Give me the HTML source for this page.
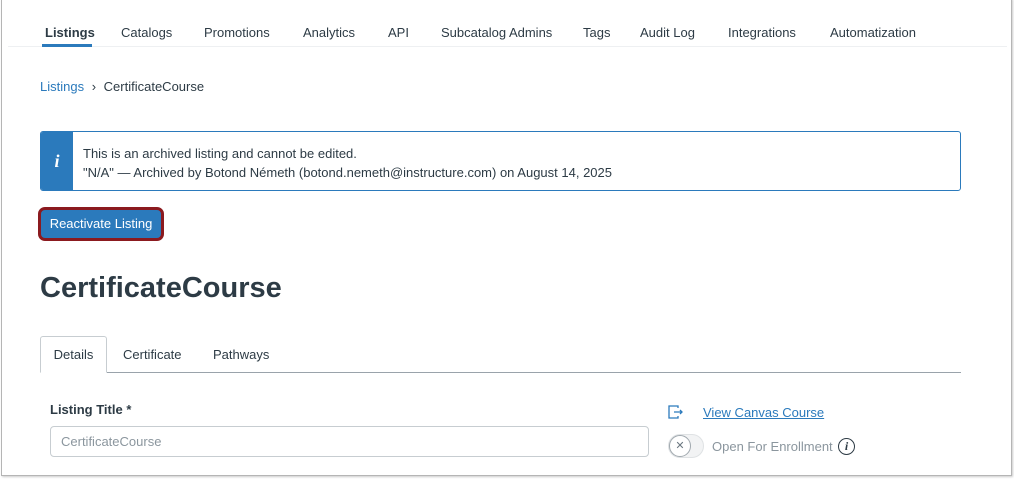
<!DOCTYPE html>
<html><head><meta charset="utf-8"><style>
*{margin:0;padding:0;box-sizing:border-box}
body{width:1014px;height:479px;background:#fff;font-family:"Liberation Sans",sans-serif;color:#2d3b45;position:relative;overflow:hidden}
.frame{position:absolute;left:1px;top:-2px;width:1011px;height:478px;border:1px solid #b5b5b5;box-shadow:1px 1px 2px #ccc}
.a{position:absolute;white-space:nowrap}
.nav{font-size:13px;color:#2d3b45;top:25px}
</style></head><body>
<div class="frame"></div>
<div class="a" style="left:8px;top:46px;width:999px;height:1px;background:#eef0f2"></div>
<div class="a nav" style="left:45px;font-weight:bold">Listings</div>
<div class="a" style="left:42px;top:44px;width:50px;height:3px;background:#2b7abc"></div>
<div class="a nav" style="left:121px">Catalogs</div>
<div class="a nav" style="left:204px">Promotions</div>
<div class="a nav" style="left:303px">Analytics</div>
<div class="a nav" style="left:388px">API</div>
<div class="a nav" style="left:441px">Subcatalog Admins</div>
<div class="a nav" style="left:583px">Tags</div>
<div class="a nav" style="left:640px">Audit Log</div>
<div class="a nav" style="left:728px">Integrations</div>
<div class="a nav" style="left:830px">Automatization</div>
<div class="a" style="left:40px;top:79px;font-size:13px"><span style="color:#2b7abc">Listings</span> <span style="margin:0 4px">&#x203A;</span> CertificateCourse</div>
<div class="a" style="left:40px;top:131px;width:921px;height:60px;border:1px solid #2b7abc;border-radius:3px;overflow:hidden">
<div style="position:absolute;left:0;top:0;width:32px;height:100%;background:#2b7abc;color:#fff;font:bold italic 18px 'Liberation Serif',serif;text-align:center;line-height:58px">i</div>
<div style="position:absolute;left:42px;top:12px;font-size:13px;line-height:19px">This is an archived listing and cannot be edited.<br>"N/A" — Archived by Botond Németh (botond.nemeth@instructure.com) on August 14, 2025</div>
</div>
<div class="a" style="left:38px;top:207px;width:126px;height:34px;border:3px solid #8b1a1f;border-radius:7px;background:#2b7abc;color:#fff;font-size:13px;text-align:center;line-height:28px">Reactivate Listing</div>
<div class="a" style="left:40px;top:272px;font-size:29px;font-weight:bold;color:#2d3b45">CertificateCourse</div>
<div class="a" style="left:40px;top:372px;width:921px;height:1px;background:#9aa3ab"></div>
<div class="a" style="left:40px;top:336px;width:67px;height:37px;border:1px solid #c7cdd1;border-bottom:1px solid #fff;border-radius:3px 3px 0 0;background:#fff;font-size:13px;text-align:center;line-height:36px">Details</div>
<div class="a" style="left:123px;top:347px;font-size:13px">Certificate</div>
<div class="a" style="left:213px;top:347px;font-size:13px">Pathways</div>
<div class="a" style="left:50px;top:402px;font-size:13px;font-weight:bold">Listing Title *</div>
<div class="a" style="left:50px;top:426px;width:599px;height:31px;border:1px solid #c7cdd1;border-radius:4px;font-size:13px;color:#8b969e;padding-left:10px;line-height:29px">CertificateCourse</div>
<svg class="a" style="left:668px;top:405px" width="16" height="14" viewBox="0 0 16 14" fill="none" stroke="#2b7abc" stroke-width="1.3"><path d="M10 3V1H1v12h9v-2M6 7h8M12 5l2 2-2 2"/></svg>
<div class="a" style="left:703px;top:405px;font-size:13px;color:#2b7abc;text-decoration:underline">View Canvas Course</div>
<div class="a" style="left:668px;top:434px;width:36px;height:24px;border-radius:12px;background:#f2f3f4;border:1px solid #dfe2e4"></div>
<div class="a" style="left:669px;top:435px;width:22px;height:22px;border-radius:50%;background:#fff;border:1px solid #a0a8ae;font-size:11px;color:#6b7780;text-align:center;line-height:20px">✕</div>
<div class="a" style="left:712px;top:439px;font-size:13px;color:#8b969e">Open For Enrollment</div>
<div class="a" style="left:838px;top:438px;width:17px;height:17px;border-radius:50%;border:1.3px solid #2d3b45;font:bold italic 12px 'Liberation Serif',serif;text-align:center;line-height:15px">i</div>
</body></html>
